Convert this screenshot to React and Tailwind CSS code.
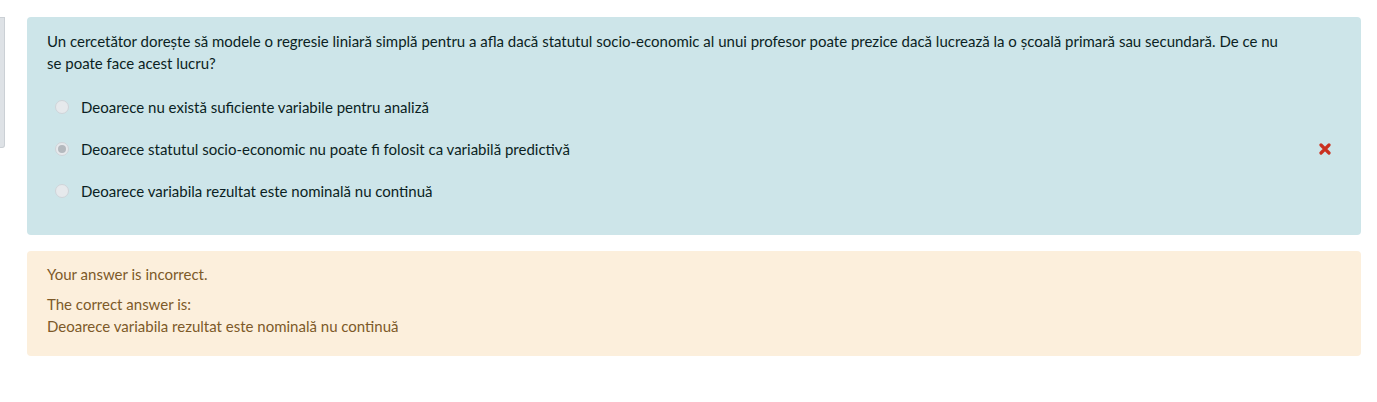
import React from 'react';

const options = [
  { text: 'Deoarece nu există suficiente variabile pentru analiză', checked: false },
  { text: 'Deoarece statutul socio-economic nu poate fi folosit ca variabilă predictivă', checked: true, wrong: true },
  { text: 'Deoarece variabila rezultat este nominală nu continuă', checked: false },
];

const Radio = ({ checked }) => (
  <span className="w-[14px] h-[14px] rounded-full border border-[#cfd4d9] bg-[#e6e9ec] flex items-center justify-center shrink-0">
    {checked && <span className="w-[8px] h-[8px] rounded-full bg-[#b4b9be]" />}
  </span>
);

const App = () => {
  return (
    <div className="w-full h-[402px] bg-white flex items-start gap-[22px] pt-[17px] pr-[16px] text-[15px] leading-[22px]" style={{ fontFamily: 'Lato, "Noto Sans", sans-serif' }}>
      {/* edge of the question info box */}
      <div className="w-[5px] h-[131px] bg-[#dee2e6] border border-l-0 border-[#cbd0d5] rounded-br-[3px] shrink-0" />

      <div className="flex-1 flex flex-col gap-[16px]">
        <div className="bg-[#cde5e9] rounded-[4px] px-[20px] pt-[13px] pb-[23px] text-[#0b1f23]">
          <p className="pr-[45px]">
            Un cercetător dorește să modele o regresie liniară simplă pentru a afla dacă statutul socio-economic al unui profesor poate prezice dacă lucrează la o școală primară sau secundară. De ce nu se poate face acest lucru?
          </p>
          <div className="mt-[12px] flex flex-col">
            {options.map((o, i) => (
              <div key={i} className="h-[42px] flex items-center">
                <span className="ml-[8px]"><Radio checked={o.checked} /></span>
                <span className="ml-[12px]">{o.text}</span>
                {o.wrong && (
                  <svg className="ml-auto mr-[10px] w-[12px] h-[12px]" viewBox="0 0 12 12">
                    <path d="M2 2L10 10M10 2L2 10" stroke="#ca3120" strokeWidth="3.2" strokeLinecap="round" />
                  </svg>
                )}
              </div>
            ))}
          </div>
        </div>

        <div className="bg-[#fcefdc] rounded-[4px] px-[20px] pt-[12px] pb-[19px] text-[#7d5a29]">
          <p>Your answer is incorrect.</p>
          <p className="mt-[8px]">The correct answer is:</p>
          <p>Deoarece variabila rezultat este nominală nu continuă</p>
        </div>
      </div>
    </div>
  );
};

export default App;
